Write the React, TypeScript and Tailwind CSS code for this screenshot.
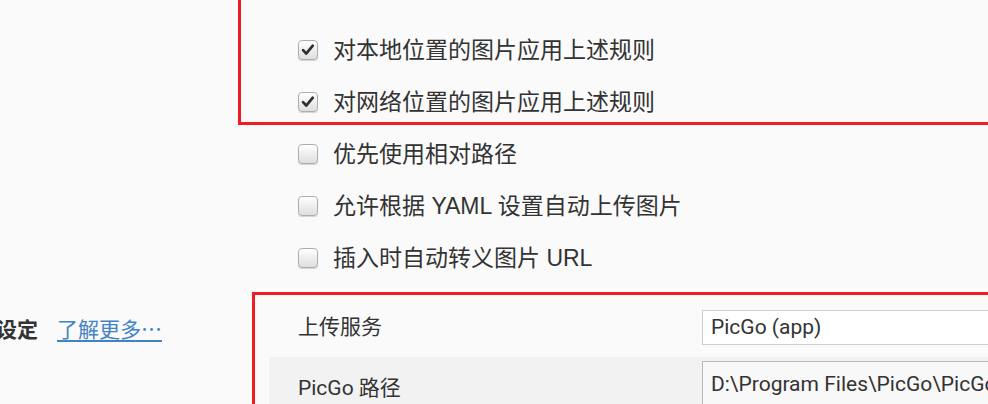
import React from "react"

const checks = [
  { label: "对本地位置的图片应用上述规则", on: true },
  { label: "对网络位置的图片应用上述规则", on: true },
  { label: "优先使用相对路径", on: false },
  { label: "允许根据 YAML 设置自动上传图片", on: false },
  { label: "插入时自动转义图片 URL", on: false },
]

function Box({ on }: { on: boolean }) {
  return (
    <span className="flex h-[20px] w-[20px] shrink-0 items-center justify-center rounded-[4px] border border-[#adadad] bg-gradient-to-b from-[#ffffff] to-[#dedede] shadow-[0_1px_1px_rgba(0,0,0,0.15)]">
      {on && (
        <svg viewBox="0 0 20 20" className="h-[16px] w-[16px]">
          <path d="M3.8 10.2 L7.8 14.4 L16 4.6" fill="none" stroke="#2f2f2f" strokeWidth="3.4" strokeLinecap="round" strokeLinejoin="round" />
        </svg>
      )}
    </span>
  )
}

export default function App() {
  return (
    <div className="relative h-[404px] w-[988px] overflow-hidden bg-[#fafafa] text-[#333] font-['Liberation_Sans','Noto_Sans_CJK_SC',sans-serif]">
      {/* image options */}
      <div className="pl-[298px] pt-[24px]">
        {checks.map((c, i) => (
          <div key={i} className="flex h-[52px] items-center gap-[15px]">
            <Box on={c.on} />
            <span className="whitespace-nowrap text-[23px] leading-none">{c.label}</span>
          </div>
        ))}
      </div>

      {/* uploader */}
      <div className="mt-[8px] flex font-['Roboto','Noto_Sans_CJK_SC',sans-serif]">
        <div className="w-[269px] shrink-0 pt-[24px]">
          <div className="ml-[-4px] flex items-center gap-[19px] whitespace-nowrap text-[21px] leading-[24px] font-['Noto_Sans_CJK_SC',sans-serif]">
            <span className="font-bold text-[#333]">设定</span>
            <span className="text-[#4183c4] underline underline-offset-[3px]">了解更多…</span>
          </div>
        </div>
        <div className="flex-1 text-[21px]">
          <div className="flex items-center pt-[18px] pb-[12px]">
            <span className="w-[433px] shrink-0 pl-[29px] whitespace-nowrap">上传服务</span>
            <div className="flex h-[35px] w-[400px] shrink-0 items-center border border-[#cfcfcf] bg-white px-[8px] whitespace-nowrap">
              PicGo (app)
            </div>
          </div>
          <div className="flex items-start bg-[#f2f2f2] pt-[4px]">
            <span className="w-[433px] shrink-0 pl-[29px] pt-[12px] whitespace-nowrap">PicGo 路径</span>
            <div className="flex h-[48px] w-[400px] shrink-0 items-center border border-[#b9b9b9] bg-[#f8f8f8] px-[8px] whitespace-nowrap">
              D:\Program Files\PicGo\PicGo.exe
            </div>
          </div>
        </div>
      </div>

      {/* annotation frames */}
      <div className="pointer-events-none absolute left-[238px] top-[-10px] h-[135px] w-[800px] border-[3px] border-[#ee1c25]" />
      <div className="pointer-events-none absolute left-[252px] top-[292px] h-[200px] w-[800px] border-[3px] border-[#ee1c25]" />
    </div>
  )
}
